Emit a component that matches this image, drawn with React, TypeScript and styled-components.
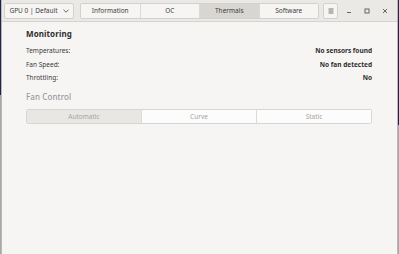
import React from "react";
import styled, { createGlobalStyle } from "styled-components";

const Global = createGlobalStyle`
  html, body { margin: 0; padding: 0; }
  body { font-family: "Noto Sans", "Open Sans", sans-serif; background: #f6f5f4; }
`;

const Screen = styled.div`
  display: flex;
  width: 399px;
  height: 254px;
  overflow: hidden;
`;

const Edge = styled.div<{ $cut: number }>`
  width: 1px;
  flex: none;
  background: linear-gradient(to bottom, #1d2350 0, #1d2350 ${(p) => p.$cut}px, #a8a8a8 ${(p) => p.$cut}px);
`;

const Window = styled.div`
  flex: 1;
  display: flex;
  flex-direction: column;
  background: #f6f5f4;
  border-left: 1px solid #b9b8b6;
  border-right: 1px solid #b9b8b6;
`;

const HeaderBar = styled.div`
  height: 22px;
  flex: none;
  display: flex;
  align-items: center;
  padding: 0 3px 0 2px;
  background: #ebe9e6;
  border-bottom: 1px solid #d6d4d1;
  box-sizing: border-box;
`;

const Button = styled.div`
  height: 16px;
  box-sizing: border-box;
  display: flex;
  align-items: center;
  justify-content: center;
  background: #f6f5f4;
  border: 1px solid #d3d1cd;
  border-radius: 2px;
  font-size: 6.5px;
  color: #3d3d3d;
`;

const GpuButton = styled(Button)`
  width: 70px;
  gap: 5px;
`;

const Tabs = styled.div`
  display: flex;
  margin-left: 6px;
  width: 239px;
  height: 16px;
  border: 1px solid #d3d1cd;
  border-radius: 2px;
  box-sizing: border-box;
  overflow: hidden;
`;

const Tab = styled.div<{ $active?: boolean }>`
  flex: 1;
  display: flex;
  align-items: center;
  justify-content: center;
  font-size: 6.5px;
  color: #3d3d3d;
  background: ${(p) => (p.$active ? "#d8d6d2" : "#f6f5f4")};
  & + & { border-left: 1px solid #dcdad6; }
`;

const MenuButton = styled(Button)`
  width: 15px;
  margin-left: 4px;
`;

const WinControls = styled.div`
  display: flex;
  margin-left: auto;
`;

const WinBtn = styled.div`
  width: 18px;
  height: 16px;
  display: flex;
  align-items: center;
  justify-content: center;
`;

const Content = styled.div`
  padding: 5px 25px 0 24px;
  display: flex;
  flex-direction: column;
`;

const Heading = styled.div<{ $muted?: boolean }>`
  font-size: 8px;
  font-weight: ${(p) => (p.$muted ? 500 : 700)};
  color: ${(p) => (p.$muted ? "#9a9998" : "#2e2e2e")};
  height: 14px;
  line-height: 14px;
  letter-spacing: 0.1px;
  margin-top: ${(p) => (p.$muted ? "5px" : "0")};
`;

const Rows = styled.div`
  display: flex;
  flex-direction: column;
  margin-top: 3px;
`;

const Row = styled.div`
  display: flex;
  justify-content: space-between;
  height: 13.5px;
  align-items: center;
  font-size: 6.5px;
  color: #3a3a3a;
`;

const Value = styled.span`
  font-weight: 700;
  color: #2e2e2e;
`;

const Segmented = styled.div`
  display: flex;
  margin-top: 5px;
  height: 15px;
  border: 1px solid #d8d6d3;
  border-radius: 2px;
  box-sizing: border-box;
  overflow: hidden;
`;

const Segment = styled.div<{ $active?: boolean }>`
  flex: 1;
  display: flex;
  align-items: center;
  justify-content: center;
  font-size: 6.5px;
  color: #a5a4a2;
  background: ${(p) => (p.$active ? "#e8e7e4" : "#fcfcfc")};
  & + & { border-left: 1px solid #dcdad6; }
`;

export default function App() {
  return (
    <>
      <Global />
      <Screen>
        <Edge $cut={95} />
        <Window>
          <HeaderBar>
            <GpuButton>
              <span>GPU 0 | Default</span>
              <svg width="6" height="4" viewBox="0 0 6 4">
                <path d="M0.5 0.8 L3 3.2 L5.5 0.8" fill="none" stroke="#555" strokeWidth="0.9" />
              </svg>
            </GpuButton>
            <Tabs>
              <Tab>Information</Tab>
              <Tab>OC</Tab>
              <Tab $active>Thermals</Tab>
              <Tab>Software</Tab>
            </Tabs>
            <MenuButton>
              <svg width="6" height="6" viewBox="0 0 6 6">
                <path d="M0.5 1 H5.5 M0.5 3 H5.5 M0.5 5 H5.5" stroke="#555" strokeWidth="0.8" />
              </svg>
            </MenuButton>
            <WinControls>
              <WinBtn>
                <svg width="6" height="6" viewBox="0 0 6 6">
                  <path d="M1 4.5 H5" stroke="#666" strokeWidth="1" />
                </svg>
              </WinBtn>
              <WinBtn>
                <svg width="6" height="6" viewBox="0 0 6 6">
                  <rect x="1" y="1" width="4" height="4" fill="none" stroke="#666" strokeWidth="1" />
                </svg>
              </WinBtn>
              <WinBtn>
                <svg width="6" height="6" viewBox="0 0 6 6">
                  <path d="M1 1 L5 5 M5 1 L1 5" stroke="#666" strokeWidth="1" />
                </svg>
              </WinBtn>
            </WinControls>
          </HeaderBar>
          <Content>
            <Heading>Monitoring</Heading>
            <Rows>
              <Row>
                <span>Temperatures:</span>
                <Value>No sensors found</Value>
              </Row>
              <Row>
                <span>Fan Speed:</span>
                <Value>No fan detected</Value>
              </Row>
              <Row>
                <span>Throttling:</span>
                <Value>No</Value>
              </Row>
            </Rows>
            <Heading $muted>Fan Control</Heading>
            <Segmented>
              <Segment $active>Automatic</Segment>
              <Segment>Curve</Segment>
              <Segment>Static</Segment>
            </Segmented>
          </Content>
        </Window>
        <Edge $cut={125} />
      </Screen>
    </>
  );
}
